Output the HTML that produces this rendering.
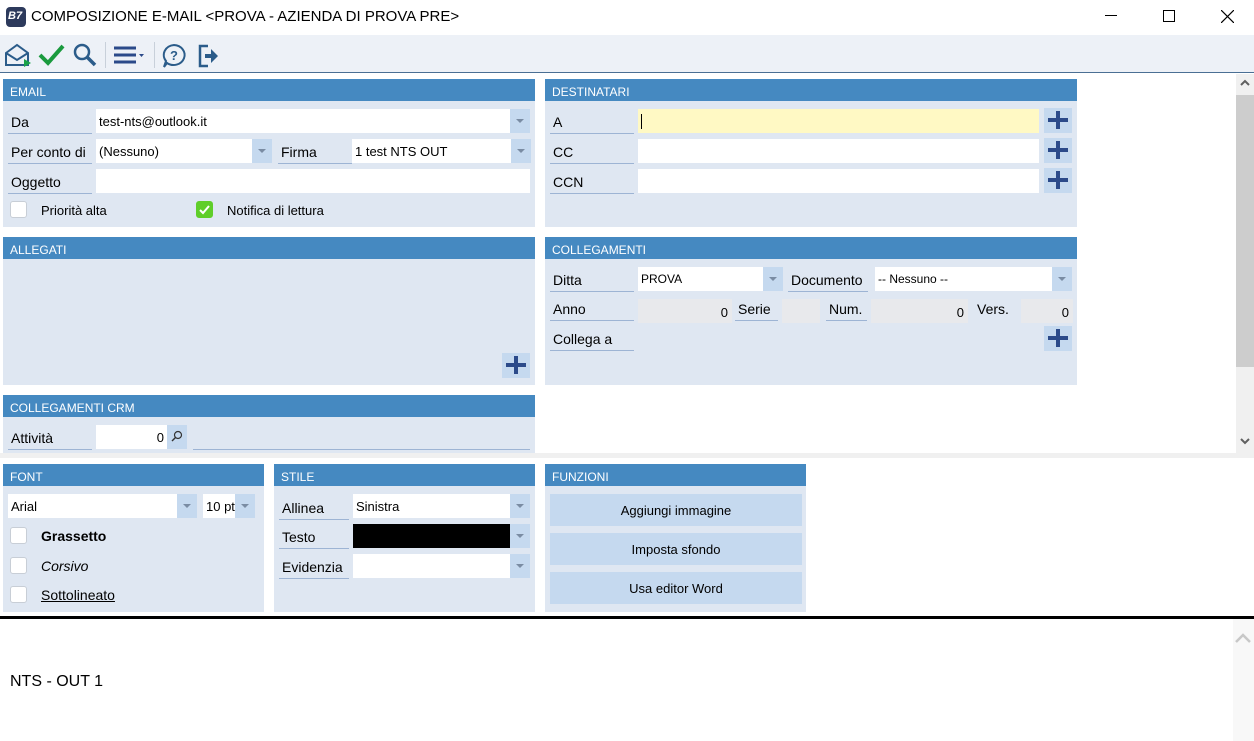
<!DOCTYPE html>
<html><head><meta charset="utf-8"><style>
*{box-sizing:border-box;margin:0;padding:0}
body{width:1254px;height:741px;position:relative;background:#fff;font-family:"Liberation Sans",sans-serif;font-size:13px;color:#000;overflow:hidden}
.a{position:absolute}
.pb{position:absolute;background:#dfe7f2}
.ph{position:absolute;left:0;right:0;top:0;height:22px;background:#4589c1;color:#fff;font-size:12px;padding:6px 0 0 7px}
.lb{position:absolute;height:24px;border-bottom:1px solid #9db4d4;padding:4px 0 0 3px;font-size:14px}
.in{position:absolute;height:24px;background:#fff;padding:5px 0 0 3px;font-size:13px}
.dd{position:absolute;width:20px;height:24px;background:#c5d9ef}
.dd:after{content:"";position:absolute;left:6px;top:10px;border-left:4px solid transparent;border-right:4px solid transparent;border-top:4px solid #7a8ca3}
.pl{position:absolute;width:28px;height:25px;background:#c5d9ef}
.pl:before{content:"";position:absolute;left:4px;top:10px;width:20px;height:4px;background:#2b4a8a}
.pl:after{content:"";position:absolute;left:12px;top:3px;width:4px;height:18px;background:#2b4a8a}
.cb{position:absolute;width:17px;height:17px;background:#fff;border:1px solid #c8ced6;border-radius:3px}
.ro{position:absolute;height:24px;background:#e8e9ec;text-align:right;padding:6px 4px 0 0;font-size:13px}
.bt{position:absolute;left:5px;width:252px;height:32px;background:#c5d9ef;text-align:center;padding-top:9px;font-size:13px}
</style></head><body>
<div class="a" style="left:6px;top:7px;width:20px;height:20px;background:#2d3a5c;border-radius:4px;color:#fff;font-size:11px;font-style:italic;padding:3px 0 0 2px;font-weight:bold">B7</div>
<div class="a" style="left:31px;top:8px;font-size:15px">COMPOSIZIONE E-MAIL &lt;PROVA - AZIENDA DI PROVA PRE&gt;</div>
<div class="a" style="left:1105px;top:15px;width:12px;height:1px;background:#000"></div>
<div class="a" style="left:1163px;top:10px;width:12px;height:12px;border:1px solid #000"></div>
<svg class="a" style="left:1221px;top:10px" width="13" height="13"><path d="M0 0L13 13M13 0L0 13" stroke="#000" stroke-width="1.2"/></svg>
<div class="a" style="left:0;top:35px;width:1254px;height:38px;background:#edf1f7;border-bottom:1px solid #4a6f94"></div>
<svg class="a" style="left:4px;top:42px" width="28" height="26"><path d="M2 11L13 3L24 11V23H2Z M2 11L13 18L24 11" fill="none" stroke="#2b5c8a" stroke-width="2"/><path d="M20 17L27 21L20 25Z" fill="#1aa34a"/></svg>
<svg class="a" style="left:38px;top:42px" width="28" height="26"><path d="M2 13L10 21L25 4" fill="none" stroke="#1a9a3e" stroke-width="4"/></svg>
<svg class="a" style="left:72px;top:42px" width="26" height="26"><circle cx="10" cy="10" r="7" fill="none" stroke="#2b5c8a" stroke-width="2.5"/><path d="M15 15L23 23" stroke="#2b5c8a" stroke-width="3.5"/></svg>
<div class="a" style="left:105px;top:42px;width:1px;height:26px;background:#c8d0da"></div>
<svg class="a" style="left:112px;top:44px" width="38" height="22"><path d="M2 4H24M2 11H24M2 18H24" stroke="#2b4a8a" stroke-width="3"/><path d="M27 10H32L29.5 13Z" fill="#2b4a8a"/></svg>
<div class="a" style="left:154px;top:42px;width:1px;height:26px;background:#c8d0da"></div>
<svg class="a" style="left:161px;top:43px" width="26" height="26"><path d="M13 2A11 10 0 1 1 6 20L3 24L5 18A11 10 0 0 1 13 2Z" fill="none" stroke="#2b5c8a" stroke-width="2"/><text x="13" y="17" font-size="13" font-weight="bold" text-anchor="middle" fill="#2b5c8a" font-family="Liberation Sans">?</text></svg>
<svg class="a" style="left:196px;top:43px" width="26" height="26"><path d="M12 3H4V23H12" fill="none" stroke="#2b5c8a" stroke-width="2.5"/><path d="M9 11H15V6L22 13L15 20V15H9Z" fill="#2b5c8a"/></svg>
<div class="a" style="left:1236px;top:74px;width:18px;height:379px;background:#f0f0f0"></div>
<div class="a" style="left:1236px;top:95px;width:18px;height:272px;background:#cdcdcd"></div>
<svg class="a" style="left:1239px;top:78px" width="12" height="10"><path d="M2 7L6 3L10 7" fill="none" stroke="#606060" stroke-width="2"/></svg>
<svg class="a" style="left:1239px;top:436px" width="12" height="10"><path d="M2 3L6 7L10 3" fill="none" stroke="#606060" stroke-width="2"/></svg>
<div class="a" style="left:0;top:453px;width:1254px;height:5px;background:#f0f0f0"></div>

<div class="pb" style="left:3px;top:79px;width:532px;height:148px"><div class="ph">EMAIL</div>
<div class="lb" style="left:5px;top:31px;width:84px">Da</div>
<div class="in" style="left:93px;top:30px;width:415px">test-nts@outlook.it</div><div class="dd" style="left:507px;top:30px"></div>
<div class="lb" style="left:5px;top:61px;width:84px">Per conto di</div>
<div class="in" style="left:93px;top:60px;width:157px">(Nessuno)</div><div class="dd" style="left:249px;top:60px"></div>
<div class="lb" style="left:275px;top:61px;width:74px">Firma</div>
<div class="in" style="left:349px;top:60px;width:160px">1 test NTS OUT</div><div class="dd" style="left:508px;top:60px"></div>
<div class="lb" style="left:5px;top:91px;width:84px">Oggetto</div>
<div class="in" style="left:93px;top:90px;width:434px"></div>
<div class="cb" style="left:7px;top:122px"></div><div class="a" style="left:38px;top:124px;font-size:13px">Priorità alta</div>
<div class="cb" style="left:193px;top:122px;background:#5fce2a;border-color:#5fce2a"><svg width="15" height="15" style="position:absolute;left:0;top:0"><path d="M3 8L6 11L12 4" fill="none" stroke="#fff" stroke-width="2"/></svg></div><div class="a" style="left:224px;top:124px;font-size:13px">Notifica di lettura</div>
</div>
<div class="pb" style="left:545px;top:79px;width:532px;height:148px"><div class="ph">DESTINATARI</div>
<div class="lb" style="left:5px;top:31px;width:84px">A</div>
<div class="in" style="left:93px;top:30px;width:401px;background:#fff9c4"><div style="width:1px;height:15px;background:#000"></div></div><div class="pl" style="left:499px;top:29px"></div>
<div class="lb" style="left:5px;top:61px;width:84px">CC</div>
<div class="in" style="left:93px;top:60px;width:401px"></div><div class="pl" style="left:499px;top:59px"></div>
<div class="lb" style="left:5px;top:91px;width:84px">CCN</div>
<div class="in" style="left:93px;top:90px;width:401px"></div><div class="pl" style="left:499px;top:89px"></div>
</div>
<div class="pb" style="left:3px;top:237px;width:532px;height:148px"><div class="ph">ALLEGATI</div>
<div class="pl" style="left:499px;top:116px"></div></div>
<div class="pb" style="left:545px;top:237px;width:532px;height:148px"><div class="ph">COLLEGAMENTI</div>
<div class="lb" style="left:5px;top:31px;width:84px">Ditta</div>
<div class="in" style="left:93px;top:30px;width:126px;font-size:12px">PROVA</div><div class="dd" style="left:218px;top:30px"></div>
<div class="lb" style="left:243px;top:31px;width:80px">Documento</div>
<div class="in" style="left:330px;top:30px;width:178px;font-size:12px">-- Nessuno --</div><div class="dd" style="left:507px;top:30px"></div>
<div class="lb" style="left:5px;top:60px;width:84px">Anno</div>
<div class="ro" style="left:93px;top:62px;width:94px">0</div>
<div class="lb" style="left:190px;top:60px;width:43px">Serie</div>
<div class="ro" style="left:237px;top:62px;width:38px"></div>
<div class="lb" style="left:281px;top:60px;width:41px">Num.</div>
<div class="ro" style="left:326px;top:62px;width:97px">0</div>
<div class="a" style="left:432px;top:64px;font-size:14px">Vers.</div>
<div class="ro" style="left:476px;top:62px;width:52px">0</div>
<div class="lb" style="left:5px;top:90px;width:84px">Collega a</div>
<div class="pl" style="left:499px;top:89px"></div>
</div>
<div class="pb" style="left:3px;top:395px;width:532px;height:58px"><div class="ph">COLLEGAMENTI CRM</div>
<div class="lb" style="left:5px;top:31px;width:84px">Attività</div>
<div class="in" style="left:93px;top:30px;width:71px;text-align:right;padding-right:3px">0</div>
<div class="a" style="left:164px;top:30px;width:20px;height:24px;background:#c5d9ef"><svg width="20" height="24"><circle cx="11" cy="10" r="3.5" fill="none" stroke="#333" stroke-width="1.2"/><path d="M8.5 12.5L5 16" stroke="#333" stroke-width="1.4"/></svg></div>
<div class="a" style="left:190px;top:54px;width:337px;height:1px;background:#9db4d4"></div>
</div>
<div class="pb" style="left:3px;top:464px;width:261px;height:148px"><div class="ph">FONT</div>
<div class="in" style="left:5px;top:30px;width:170px">Arial</div><div class="dd" style="left:174px;top:30px"></div>
<div class="in" style="left:200px;top:30px;width:33px">10 pt</div><div class="dd" style="left:232px;top:30px"></div>
<div class="cb" style="left:7px;top:63px"></div><div class="a" style="left:38px;top:64px;font-weight:bold;font-size:14px">Grassetto</div>
<div class="cb" style="left:7px;top:93px"></div><div class="a" style="left:38px;top:94px;font-style:italic;font-size:14px">Corsivo</div>
<div class="cb" style="left:7px;top:122px"></div><div class="a" style="left:38px;top:123px;text-decoration:underline;font-size:14px">Sottolineato</div>
</div>
<div class="pb" style="left:274px;top:464px;width:261px;height:148px"><div class="ph">STILE</div>
<div class="lb" style="left:5px;top:32px;width:70px">Allinea</div>
<div class="in" style="left:79px;top:30px;width:158px">Sinistra</div><div class="dd" style="left:236px;top:30px"></div>
<div class="lb" style="left:5px;top:61px;width:70px">Testo</div>
<div class="in" style="left:79px;top:60px;width:158px;background:#000"></div><div class="dd" style="left:236px;top:60px"></div>
<div class="lb" style="left:5px;top:91px;width:70px">Evidenzia</div>
<div class="in" style="left:79px;top:90px;width:158px"></div><div class="dd" style="left:236px;top:90px"></div>
</div>
<div class="pb" style="left:545px;top:464px;width:261px;height:148px"><div class="ph">FUNZIONI</div>
<div class="bt" style="top:30px">Aggiungi immagine</div>
<div class="bt" style="top:69px">Imposta sfondo</div>
<div class="bt" style="top:108px">Usa editor Word</div>
</div>
<div class="a" style="left:0;top:616px;width:1254px;height:3px;background:#000"></div>
<div class="a" style="left:1233px;top:619px;width:21px;height:122px;background:#f8f8f8"></div>
<svg class="a" style="left:1235px;top:632px" width="16" height="12"><path d="M1 10L8 3L15 10" fill="none" stroke="#c8c8c8" stroke-width="2.5"/></svg>
<div class="a" style="left:10px;top:673px;font-size:16px">NTS - OUT 1</div>
</body></html>
